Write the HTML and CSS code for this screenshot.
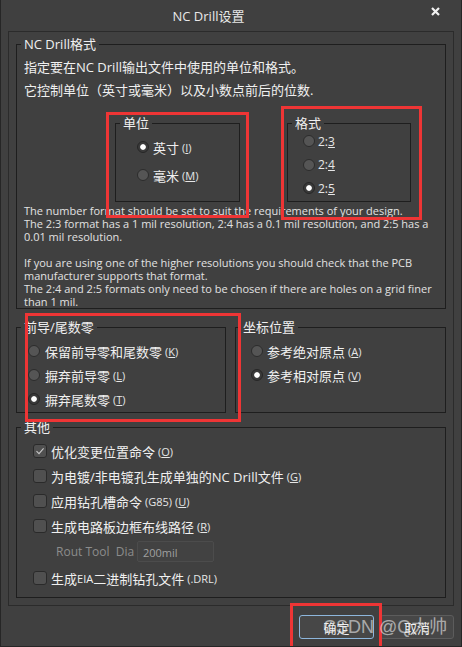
FILE: index.html
```html
<!DOCTYPE html>
<html lang="zh-CN">
<head>
  <meta charset="UTF-8">
  <title>NC Drill设置</title>
  <link rel="stylesheet" href="styles.css">
</head>
<body>
  <div class="window">
    <div class="titlebar">
      <div class="title">NC Drill设置</div>
      <div class="close">
        <svg width="9" height="9" viewBox="0 0 9 9"><path d="M1 1L8 8M8 1L1 8" stroke="#f2f2f2" stroke-width="2.2"/></svg>
      </div>
    </div>

    <div class="panel">
      <fieldset class="group g-main">
        <legend>NC Drill格式</legend>
        <p class="intro">指定要在NC Drill输出文件中使用的单位和格式。<br>它控制单位（英寸或毫米）以及小数点前后的位数.</p>

        <div class="fmt-row">
          <fieldset class="group g-unit">
            <legend>单位</legend>
            <div class="opts">
              <div class="opt"><span class="radio on"></span>英寸 <span class="acc">(<u>I</u>)</span></div>
              <div class="opt"><span class="radio"></span>毫米 <span class="acc">(<u>M</u>)</span></div>
            </div>
          </fieldset>
          <fieldset class="group g-digits">
            <legend>格式</legend>
            <div class="opts">
              <div class="opt"><span class="radio"></span><span class="acc num">2:<u>3</u></span></div>
              <div class="opt"><span class="radio"></span><span class="acc num">2:<u>4</u></span></div>
              <div class="opt"><span class="radio on"></span><span class="acc num">2:<u>5</u></span></div>
            </div>
          </fieldset>
        </div>

        <p class="desc">The number format should be set to suit the requirements of your design.<br>
The 2:3 format has a 1 mil resolution, 2:4 has a 0.1 mil resolution, and 2:5 has a<br>
0.01 mil resolution.<br>
<br>
If you are using one of the higher resolutions you should check that the PCB<br>
manufacturer supports that format.<br>
The 2:4 and 2:5 formats only need to be chosen if there are holes on a grid finer<br>
than 1 mil.</p>
      </fieldset>

      <div class="pair">
        <fieldset class="group g-zeros">
          <legend>前导/尾数零</legend>
          <div class="opts">
            <div class="opt"><span class="radio"></span>保留前导零和尾数零 <span class="acc">(<u>K</u>)</span></div>
            <div class="opt"><span class="radio"></span>摒弃前导零 <span class="acc">(<u>L</u>)</span></div>
            <div class="opt"><span class="radio on"></span>摒弃尾数零 <span class="acc">(<u>T</u>)</span></div>
          </div>
        </fieldset>
        <fieldset class="group g-origin">
          <legend>坐标位置</legend>
          <div class="opts">
            <div class="opt"><span class="radio"></span>参考绝对原点 <span class="acc">(<u>A</u>)</span></div>
            <div class="opt"><span class="radio on"></span>参考相对原点 <span class="acc">(<u>V</u>)</span></div>
          </div>
        </fieldset>
      </div>

      <fieldset class="group g-other">
        <legend>其他</legend>
        <div class="opts">
          <div class="opt"><span class="check on"><svg width="12" height="12" viewBox="0 0 12 12"><path d="M2.5 6.2L5 8.6L9.6 3.4" fill="none" stroke="#c8c8c8" stroke-width="1.1"/></svg></span>优化变更位置命令 <span class="acc">(<u>O</u>)</span></div>
          <div class="opt"><span class="check"></span>为电镀/非电镀孔生成单独的NC Drill文件 <span class="acc">(<u>G</u>)</span></div>
          <div class="opt"><span class="check"></span>应用钻孔槽命令 <span class="acc">(G85) (<u>U</u>)</span></div>
          <div class="opt"><span class="check"></span>生成电路板边框布线路径 <span class="acc">(<u>R</u>)</span></div>
          <div class="opt rout"><span class="rout-label">Rout Tool&nbsp; Dia (</span><span class="field">200mil</span></div>
          <div class="opt last"><span class="check"></span>生成<span class="small">EIA</span>二进制钻孔文件 <span class="acc">(.DRL)</span></div>
        </div>
      </fieldset>
    </div>

    <div class="buttons">
      <button class="btn primary">确定</button>
      <button class="btn">取消</button>
    </div>

    <div class="mark m1"></div>
    <div class="mark m2"></div>
    <div class="mark m3"></div>
    <div class="mark m4"></div>
    <div class="watermark">CSDN @Q大帅</div>
  </div>
</body>
</html>
```

FILE: styles.css
```css
* {
  box-sizing: border-box;
}

body {
  margin: 0;
  background: #404040;
  font-family: "Open Sans", "Noto Sans CJK SC", sans-serif;
  color: #f0f0f0;
}

.window {
  position: relative;
  width: 462px;
  height: 647px;
  background: #404040;
  border: 1px solid #262626;
  border-top: none;
  overflow: hidden;
}

.titlebar {
  display: flex;
  height: 31px;
  align-items: center;
}

.title {
  flex: 1;
  text-align: center;
  font-size: 13px;
  color: #e8e8e8;
}

.close {
  width: 45px;
  height: 31px;
  display: flex;
  align-items: center;
  padding-left: 15px;
  padding-bottom: 8px;
}

.panel {
  margin: 0 7px;
  border: 1px solid #2b2b2b;
  padding: 4px 7px 7px;
}

fieldset.group {
  margin: 0;
  min-width: 0;
  border: 1px solid #1e1e1e;
  padding: 0 7px;
}

legend {
  font-size: 13px;
  line-height: 16px;
  padding: 0 3px;
  margin-left: -3px;
  color: #f0f0f0;
}

.intro {
  margin: 0;
  padding-top: 4px;
  font-size: 13px;
  line-height: 23px;
}

.fmt-row {
  display: flex;
  gap: 47px;
  margin: 13px 0 0 91px;
}

.g-unit,
.g-digits {
  height: 87px;
}

.g-unit {
  width: 125px;
}

.g-digits {
  width: 124px;
}

.opts {
  display: flex;
  flex-direction: column;
}

.opt {
  display: flex;
  align-items: center;
  height: 18px;
  font-size: 13px;
  white-space: nowrap;
}

.acc {
  font-size: 11px;
  margin-left: 3px;
  color: #e6e6e6;
}

.acc.num {
  font-size: 12px;
  margin-left: 0;
}

.radio {
  width: 12px;
  height: 12px;
  border-radius: 50%;
  background: #555;
  border: 1px solid #2c2c2c;
  margin-right: 4px;
  flex: none;
}

.radio.on {
  background: radial-gradient(circle, #fff 0 2.4px, #3a3a3a 3.2px);
  border-color: #262626;
}

.g-unit .opts {
  padding-top: 7px;
  gap: 10px;
}

.g-unit .radio {
  margin-left: 14px;
}

.g-digits .opts {
  padding-top: 1px;
  gap: 5.5px;
}

.g-digits .radio {
  margin-left: 8px;
  margin-right: 3px;
}

.desc {
  margin: 2px 0 0;
  font-size: 11px;
  line-height: 13px;
  color: #e2e2e2;
  white-space: nowrap;
}

.pair {
  display: flex;
  gap: 9px;
  margin-top: 10px;
}

.g-zeros,
.g-origin {
  height: 94px;
}

.g-zeros {
  width: 210px;
}

.g-origin {
  width: 211px;
}

.g-zeros .opts,
.g-origin .opts {
  padding-top: 7px;
  gap: 6px;
}

.g-zeros .radio {
  margin-left: 4px;
  margin-right: 5px;
}

.g-origin .radio {
  margin-left: 8px;
}

.g-other {
  margin-top: 6px !important;
  padding-bottom: 9px !important;
}

.g-other .opts {
  padding-top: 6px;
  gap: 5px;
}

.g-other .opt {
  height: 20px;
}

.g-other .opt.last {
  margin-top: 2px;
}

.check {
  width: 14px;
  height: 14px;
  border-radius: 3px;
  background: #505050;
  border: 1px solid #2a2a2a;
  margin: 0 4px 0 9px;
  flex: none;
  display: flex;
  align-items: center;
  justify-content: center;
}

.small {
  font-size: 11px;
}

.rout {
  padding-left: 32px;
}

.rout-label {
  font-size: 12px;
  color: #8c8c8c;
  width: 81px;
}

.field {
  width: 77px;
  height: 21px;
  border: 1px solid #4c4c4c;
  border-radius: 2px;
  background: #424242;
  font-size: 11px;
  color: #a0a0a0;
  padding: 3px 0 0 5px;
}

.buttons {
  display: flex;
  justify-content: flex-end;
  gap: 6px;
  margin: 9px 7px 0 0;
}

.btn {
  width: 74px;
  height: 24px;
  background: #474747;
  border: 1px solid #5c5c5c;
  border-radius: 3px;
  color: #f0f0f0;
  font-family: "Open Sans", "Noto Sans CJK SC", sans-serif;
  font-size: 13px;
  padding: 0;
}

.btn.primary {
  width: 75px;
  border-color: #8db6dc;
}

.mark {
  position: absolute;
  border: 3px solid #ee3535;
}

.m1 {
  left: 105px;
  top: 112px;
  width: 143px;
  height: 106px;
}

.m2 {
  left: 280px;
  top: 106px;
  width: 141px;
  height: 114px;
}

.m3 {
  left: 24px;
  top: 313px;
  width: 216px;
  height: 109px;
}

.m4 {
  left: 289px;
  top: 603px;
  width: 92px;
  height: 50px;
}

.watermark {
  position: absolute;
  left: 322px;
  top: 615px;
  font-family: "Liberation Sans", "Noto Sans CJK SC", sans-serif;
  font-size: 18px;
  line-height: 24px;
  color: rgba(235, 235, 235, 0.62);
  white-space: nowrap;
}
```
